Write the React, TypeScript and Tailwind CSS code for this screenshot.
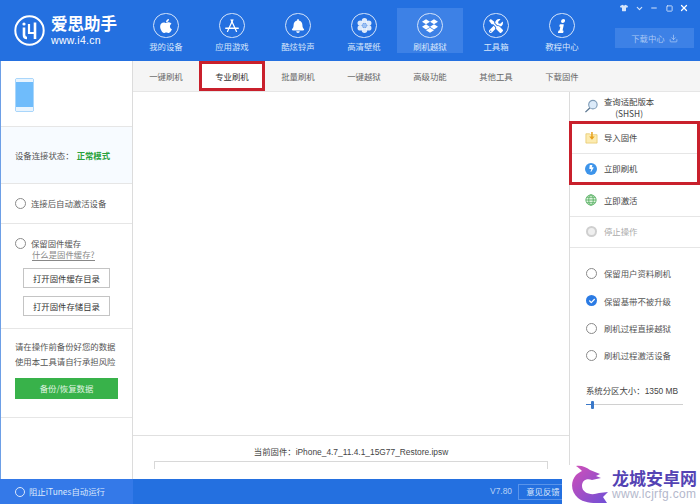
import { FaApple, FaBell, FaDropbox, FaTools, FaInfo, FaTshirt, FaCheck, FaBolt } from 'react-icons/fa'
import { Download, Minus, Square, X, ChevronDown } from 'lucide-react'

const font = { fontFamily: '"Noto Sans CJK SC", "Liberation Sans", sans-serif' }
const latin = { fontFamily: '"Liberation Sans", sans-serif' }

const navItems = [
  { label: '我的设备', icon: <FaApple className="h-[16px] w-[16px]" /> },
  {
    label: '应用游戏',
    icon: (
      <svg viewBox="0 0 20 20" className="h-[18px] w-[18px]" fill="none" stroke="#fff" strokeWidth="1.4" strokeLinecap="round">
        <path d="M11 3 L5 16" />
        <path d="M9 3 L15 16" />
        <path d="M3 12.5 H17" />
      </svg>
    ),
  },
  { label: '酷炫铃声', icon: <FaBell className="h-[14px] w-[14px]" /> },
  {
    label: '高清壁纸',
    icon: (
      <svg viewBox="0 0 20 20" className="h-[17px] w-[17px]" fill="#fff">
        <circle cx="10" cy="4.5" r="3.2" opacity="0.85" />
        <circle cx="10" cy="15.5" r="3.2" opacity="0.85" />
        <circle cx="5" cy="7.2" r="3.2" opacity="0.85" />
        <circle cx="15" cy="7.2" r="3.2" opacity="0.85" />
        <circle cx="5" cy="12.8" r="3.2" opacity="0.85" />
        <circle cx="15" cy="12.8" r="3.2" opacity="0.85" />
        <circle cx="10" cy="10" r="2.6" fill="#9cc0f2" />
      </svg>
    ),
  },
  { label: '刷机越狱', icon: <FaDropbox className="h-[16px] w-[16px]" />, active: true },
  { label: '工具箱', icon: <FaTools className="h-[14px] w-[14px]" /> },
  { label: '教程中心', icon: <FaInfo className="h-[14px] w-[14px] -skew-x-12" /> },
]

const tabs = ['一键刷机', '专业刷机', '批量刷机', '一键越狱', '高级功能', '其他工具', '下载固件']

function Radio({ checked }: { checked?: boolean }) {
  if (checked) {
    return (
      <span className="flex h-[11px] w-[11px] shrink-0 items-center justify-center rounded-full bg-[#2b7be4]">
        <FaCheck className="h-[6px] w-[6px] text-white" />
      </span>
    )
  }
  return <span className="h-[11px] w-[11px] shrink-0 rounded-full border border-[#8a8a8a] bg-white" />
}

function OutlineButton({ label }: { label: string }) {
  return (
    <button className="flex h-[20px] w-[87px] items-center justify-center border border-[#c4c4c4] bg-white text-[8.4px] text-[#333]">
      {label}
    </button>
  )
}

function ActionRow({ icon, label, muted }: { icon: React.ReactNode; label: string; muted?: boolean }) {
  return (
    <div className="flex h-[31.5px] items-center border-b border-[#e6e6e6] pl-[11px]">
      <span className="flex w-[20px] shrink-0 items-center justify-center">{icon}</span>
      <span className={`ml-[3px] text-[8.4px] ${muted ? 'text-[#aaa]' : 'text-[#444]'}`}>{label}</span>
    </div>
  )
}

function CheckRow({ label, checked }: { label: string; checked?: boolean }) {
  return (
    <div className="flex h-[27.3px] items-center pl-[16px]">
      <Radio checked={checked} />
      <span className="ml-[7px] text-[8.4px] text-[#555]">{label}</span>
    </div>
  )
}

function ShshIcon() {
  return (
    <svg viewBox="0 0 16 16" className="h-[15px] w-[15px]" fill="none">
      <circle cx="9.5" cy="6" r="4.5" fill="#dcebfa" stroke="#7f9cb8" strokeWidth="1.2" />
      <path d="M6.2 9.5 L1.5 14" stroke="#5b7690" strokeWidth="1.4" />
    </svg>
  )
}

function FolderIcon() {
  return (
    <svg viewBox="0 0 14 14" className="h-[13px] w-[13px]" fill="none">
      <path d="M1 3 H5 L6 4 H13 V13 H1 Z" fill="#fcebb0" stroke="#e6c766" strokeWidth="0.8" />
      <path d="M7.5 1 V8" stroke="#e8a11c" strokeWidth="1.6" />
      <path d="M4.5 6 L7.5 9.5 L10.5 6 Z" fill="#e8a11c" />
    </svg>
  )
}

function GlobeIcon() {
  return (
    <svg viewBox="0 0 14 14" className="h-[12px] w-[12px]" fill="#dff3df" stroke="#49a956" strokeWidth="0.9">
      <circle cx="7" cy="7" r="6" />
      <ellipse cx="7" cy="7" rx="2.6" ry="6" fill="none" />
      <path d="M1 7 H13 M2 3.8 H12 M2 10.2 H12" fill="none" />
    </svg>
  )
}

function LogoMark() {
  return (
    <svg viewBox="0 0 31 31" className="h-[31px] w-[31px] shrink-0" fill="none" stroke="#fff">
      <circle cx="15.5" cy="15.5" r="14.2" strokeWidth="2" />
      <circle cx="10" cy="9" r="1.6" fill="#fff" stroke="none" />
      <path d="M10 12.5 V20 Q10 23 13 23" strokeWidth="2.6" />
      <path d="M15 9 V18 H20" strokeWidth="2.2" />
      <path d="M21 7.5 V24" strokeWidth="2.6" />
    </svg>
  )
}

function DragonLogo() {
  return (
    <svg viewBox="0 0 38 39" className="h-[39px] w-[38px] shrink-0">
      <defs>
        <linearGradient id="dragon" x1="0" y1="0" x2="1" y2="1">
          <stop offset="0" stopColor="#d24fb8" />
          <stop offset="1" stopColor="#6f4fd6" />
        </linearGradient>
      </defs>
      <path
        d="M5 1 C10 0 15 2 19 5 L29 9 L25 11 L30 13 L21 15 C15 13 11 16 11 21 C11 28 20 31 28 28 L37 27 L32 32 L36 38 C26 38 14 39 7 33 C0 27 -1 17 5 10 C7 8 9 7 11 6 C9 4 7 2 5 1 Z"
        fill="url(#dragon)"
      />
    </svg>
  )
}

export default function App() {
  return (
    <div className="relative flex h-[504px] w-[700px] flex-col overflow-hidden bg-white" style={font}>
      {/* Header */}
      <div className="flex h-[61px] shrink-0 bg-[#2470e0]">
        <div className="flex w-[133px] shrink-0 items-center pl-[14px]">
          <LogoMark />
          <div className="ml-[6px] flex flex-col text-white">
            <span className="text-[16.5px] font-bold leading-[17px]">爱思助手</span>
            <span className="mt-[3px] text-[10.5px] leading-[11px] tracking-[0.3px]" style={latin}>
              www.i4.cn
            </span>
          </div>
        </div>
        <div className="flex pt-[8px]">
          {navItems.map((item) => (
            <div
              key={item.label}
              className={`flex h-[45px] w-[66px] flex-col items-center ${item.active ? 'bg-[#3d81e6]' : ''}`}
            >
              <span className="mt-[5px] flex h-[26px] w-[26px] items-center justify-center rounded-full border border-[#d5e4fa] text-white">
                {item.icon}
              </span>
              <span className="mt-[1px] text-[8.4px] leading-[14px] text-[#d8e6fb]">{item.label}</span>
            </div>
          ))}
        </div>
        <div className="ml-auto flex w-[85px] flex-col items-end pr-[6px] pt-[1px]">
          <div className="flex h-[14px] items-center gap-[3px] pr-[4px] text-white">
            <span className="flex w-[12px] justify-center"><FaTshirt className="h-[8px] w-[8px] text-[#d5e4fa]" /></span>
            <span className="flex w-[12px] justify-center"><ChevronDown className="h-[9px] w-[9px] text-[#d5e4fa]" strokeWidth={3} /></span>
            <span className="flex w-[12px] justify-center"><Minus className="h-[8px] w-[8px] text-[#d5e4fa]" strokeWidth={3} /></span>
            <span className="flex w-[12px] justify-center"><Square className="h-[7px] w-[7px] text-[#d5e4fa]" strokeWidth={3} /></span>
            <span className="flex w-[12px] justify-center"><X className="h-[10px] w-[10px] text-white" strokeWidth={3} /></span>
          </div>
          <div className="mt-[13px] flex h-[20px] w-[79px] items-center justify-center gap-[4px] bg-[#3d81e6] text-[8.4px] text-[#a9c8f5]">
            下载中心
            <Download className="h-[9px] w-[9px]" />
          </div>
        </div>
      </div>

      {/* Body */}
      <div className="flex min-h-0 flex-1 border-l border-[#6d9fe6]">
        {/* Left sidebar */}
        <div className="flex w-[132px] shrink-0 flex-col border-r border-[#dcdcdc]">
          <div className="flex h-[66px] shrink-0 items-start border-b border-[#e6e6e6] pl-[14px] pt-[17px]">
            <div className="flex h-[34px] w-[19px] flex-col rounded-[2px] border border-[#a9d6fb] bg-[#6fbcfb]">
              <div className="h-[3px] bg-[#e8f4fe]" />
              <div className="flex-1" />
              <div className="h-[4px] bg-[#e8f4fe]" />
            </div>
          </div>
          <div className="flex h-[57px] shrink-0 items-center border-b border-[#e6e6e6] bg-[#f7fbff] pl-[14px] text-[8.4px]">
            <span className="text-[#555]">设备连接状态：</span>
            <span className="ml-[3px] font-bold text-[#2aa23c]">正常模式</span>
          </div>
          <div className="flex h-[40px] shrink-0 items-center border-b border-[#e6e6e6] pl-[14px]">
            <Radio />
            <span className="ml-[5px] text-[8.4px] text-[#555]">连接后自动激活设备</span>
          </div>
          <div className="flex h-[105px] shrink-0 flex-col border-b border-[#e6e6e6] pl-[14px] pt-[13px]">
            <div className="flex items-center">
              <Radio />
              <span className="ml-[5px] text-[8.4px] leading-[12px] text-[#555]">保留固件缓存</span>
            </div>
            <span className="ml-[17px] w-fit border-b border-[#888] text-[8.4px] leading-[11px] text-[#888]">什么是固件缓存?</span>
            <div className="ml-[8px] mt-[7px] flex flex-col gap-[8px]">
              <OutlineButton label="打开固件缓存目录" />
              <OutlineButton label="打开固件存储目录" />
            </div>
          </div>
          <div className="flex h-[89px] shrink-0 flex-col border-b border-[#e6e6e6] pl-[14px] pt-[10px]">
            <span className="text-[8.4px] leading-[15px] text-[#555]">请在操作前备份好您的数据</span>
            <span className="text-[8.4px] leading-[15px] text-[#555]">使用本工具请自行承担风险</span>
            <button className="mt-[9px] h-[21px] w-[103px] bg-[#38b24a] text-[8.4px] text-[#e0f4e2]">备份/恢复数据</button>
          </div>
        </div>

        {/* Center */}
        <div className="flex min-w-0 flex-1 flex-col">
          <div className="flex h-[31px] shrink-0 border-b border-[#e6e6e6] bg-[#f5f5f5]">
            {tabs.map((tab, i) => (
              <div
                key={tab}
                className={`flex w-[66px] shrink-0 items-center justify-center text-[8.4px] ${
                  i === 1 ? 'border-[3px] border-[#c9202c] bg-white text-[#333]' : 'text-[#666]'
                }`}
              >
                {tab}
              </div>
            ))}
          </div>
          <div className="flex min-h-0 flex-1">
            <div className="flex min-w-0 flex-1 flex-col">
              <div className="flex-1" />
              <div className="flex h-[44px] shrink-0 flex-col items-center border-t border-[#e0e0e0] pt-[9px]">
                <span className="text-[8.4px] leading-[12px] text-[#444]">
                  当前固件：<span style={latin}>iPhone_4.7_11.4.1_15G77_Restore.ipsw</span>
                </span>
                <div className="mt-[3px] h-[8px] w-[394px] border border-b-0 border-[#d8d8d8]" />
              </div>
            </div>
            {/* Right panel */}
            <div className="relative flex w-[131px] shrink-0 flex-col border-l border-[#dcdcdc]">
              <div className="flex h-[30px] items-center border-b border-[#e6e6e6] pl-[11px]">
                <span className="flex w-[20px] justify-center"><ShshIcon /></span>
                <span className="ml-[3px] text-center text-[8.4px] leading-[12px] text-[#444]">查询适配版本<br />(SHSH)</span>
              </div>
              <ActionRow label="导入固件" icon={<FolderIcon />} />
              <ActionRow label="立即刷机" icon={<span className="flex h-[12px] w-[12px] items-center justify-center rounded-full bg-[#3d94ea]"><FaBolt className="h-[7px] w-[7px] text-white" /></span>} />
              <ActionRow label="立即激活" icon={<GlobeIcon />} />
              <ActionRow label="停止操作" muted icon={<span className="flex h-[11px] w-[11px] items-center justify-center rounded-full bg-[#cfcfcf]"><span className="h-[7px] w-[7px] rounded-full bg-[#efefef]" /></span>} />
              <div className="mt-[12px] flex flex-col">
                <CheckRow label="保留用户资料刷机" />
                <CheckRow label="保留基带不被升级" checked />
                <CheckRow label="刷机过程直接越狱" />
                <CheckRow label="刷机过程激活设备" />
              </div>
              <div className="mt-[15px] pl-[16px] text-[8.4px] leading-[12px] text-[#444]">
                系统分区大小：<span style={latin}>1350 MB</span>
              </div>
              <div className="relative ml-[16px] mt-[7px] h-[1px] w-[97px] bg-[#d0d0d0]">
                <div className="absolute left-0 top-0 h-[1px] w-[6px] bg-[#3a78c8]" />
                <div className="absolute left-[5px] top-[-3px] h-[8px] w-[3px] rounded-[1px] bg-[#3a78c8]" />
              </div>

              {/* annotation box over the panel rows */}
              <div className="absolute left-[-1px] right-0 top-[29px] h-[64px] border-[3px] border-[#c9202c]" />
            </div>
          </div>
        </div>
      </div>

      {/* Footer */}
      <div className="flex h-[25px] shrink-0 items-stretch bg-[#2470e0]">
        <div className="flex w-[133px] shrink-0 items-center bg-[#3479e8] pl-[15px]">
          <span className="h-[10px] w-[10px] rounded-full border border-[#dbe8fb]" />
          <span className="ml-[4px] text-[8.4px] text-[#dbe8fb]">阻止iTunes自动运行</span>
        </div>
        <div className="flex flex-1 items-center pr-[132px]">
          <span className="ml-auto text-[8.4px] text-[#b9d2f6]" style={latin}>V7.80</span>
          <span className="ml-[6px] flex h-[16px] w-[50px] items-center justify-center border border-[#5a94ea] text-[8.4px] text-[#dbe8fb]">意见反馈</span>
        </div>
      </div>

      {/* Watermark */}
      <div className="absolute bottom-0 right-0 flex h-[39px] w-[138px] items-center bg-white pl-[9px]">
        <DragonLogo />
        <div className="ml-[3px] flex flex-col">
          <span className="whitespace-nowrap text-[17px] font-bold leading-[17px] text-[#5443b4]">龙城安卓网</span>
          <span className="mt-[3px] whitespace-nowrap text-[12px] leading-[11px] tracking-[0.3px] text-[#b4b8cc]" style={latin}>www.lcjrfg.com</span>
        </div>
      </div>
    </div>
  )
}
